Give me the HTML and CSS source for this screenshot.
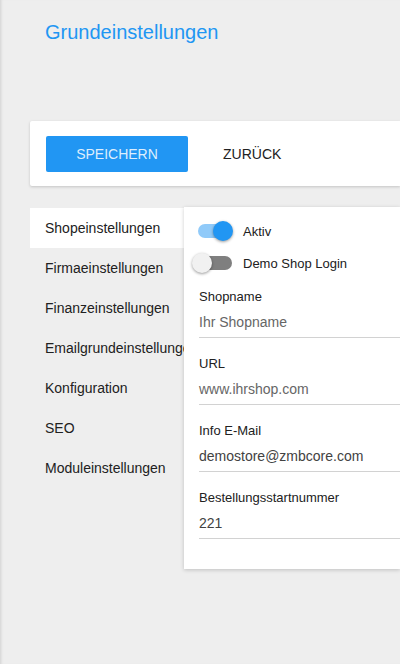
FILE: index.html
```html
<!DOCTYPE html>
<html lang="de">
<head>
<meta charset="utf-8">
<title>Grundeinstellungen</title>
<link rel="stylesheet" href="styles.css">
</head>
<body>
<div class="page">
  <h1 class="title">Grundeinstellungen</h1>

  <div class="toolbar">
    <button class="btn btn-primary">Speichern</button>
    <button class="btn btn-flat">Zurück</button>
  </div>

  <div class="content">
    <nav class="nav">
      <div class="nav-item active">Shopeinstellungen</div>
      <div class="nav-item">Firmaeinstellungen</div>
      <div class="nav-item">Finanzeinstellungen</div>
      <div class="nav-item">Emailgrundeinstellungen</div>
      <div class="nav-item">Konfiguration</div>
      <div class="nav-item">SEO</div>
      <div class="nav-item">Moduleinstellungen</div>
    </nav>

    <section class="panel">
      <div class="toggle-row">
        <span class="switch on"><span class="thumb"></span></span>
        <span class="toggle-label">Aktiv</span>
      </div>
      <div class="toggle-row">
        <span class="switch off"><span class="thumb"></span></span>
        <span class="toggle-label">Demo Shop Login</span>
      </div>

      <div class="fields">
        <div class="field">
          <div class="field-label">Shopname</div>
          <div class="field-input placeholder">Ihr Shopname</div>
        </div>
        <div class="field">
          <div class="field-label">URL</div>
          <div class="field-input placeholder">www.ihrshop.com</div>
        </div>
        <div class="field">
          <div class="field-label">Info E-Mail</div>
          <div class="field-input">demostore@zmbcore.com</div>
        </div>
        <div class="field">
          <div class="field-label">Bestellungsstartnummer</div>
          <div class="field-input">221</div>
        </div>
      </div>
    </section>
  </div>
</div>
</body>
</html>
```

FILE: styles.css
```css
* {
  box-sizing: border-box;
}

html, body {
  margin: 0;
  padding: 0;
  background: #eeeeee;
}

body {
  font-family: "Liberation Sans", Arial, Helvetica, sans-serif;
  color: #212121;
}

.page {
  min-height: 664px;
  padding-left: 30px;
  box-shadow: inset 3px 0 3px -2px rgba(0, 0, 0, 0.12);
  overflow: hidden;
}

.title {
  margin: 0;
  padding: 21px 0 0 15px;
  font-size: 20px;
  line-height: 23px;
  font-weight: normal;
  color: #2196f3;
}

.toolbar {
  margin-top: 77px;
  background: #ffffff;
  height: 65px;
  padding: 15px 16px 14px;
  display: flex;
  align-items: center;
  box-shadow: 0 1px 3px rgba(0, 0, 0, 0.18);
  border-radius: 2px 0 0 2px;
}

.btn {
  font-family: inherit;
  font-size: 14px;
  text-transform: uppercase;
  height: 36px;
  border: none;
  border-radius: 2px;
  background: transparent;
  cursor: pointer;
  line-height: 36px;
}

.btn-primary {
  width: 142px;
  padding: 0;
  background: #2196f3;
  color: rgba(255, 255, 255, 0.86);
}

.btn-flat {
  margin-left: 16px;
  padding: 0 19px;
  color: #212121;
}

.content {
  margin-top: 21px;
  display: flex;
  align-items: flex-start;
}

.nav {
  width: 154px;
  flex: 0 0 154px;
  margin-top: 1px;
}

.nav-item {
  height: 40px;
  line-height: 40px;
  padding-left: 15px;
  font-size: 14px;
  color: #212121;
  white-space: nowrap;
}

.nav-item.active {
  background: #ffffff;
}

.panel {
  position: relative;
  flex: 1;
  background: #ffffff;
  padding: 8px 0 30px 15px;
  box-shadow: 0 1px 4px rgba(0, 0, 0, 0.2);
}

.toggle-row {
  height: 32px;
  display: flex;
  align-items: center;
}

.switch {
  position: relative;
  width: 34px;
  height: 14px;
  margin-left: -1px;
  margin-right: 11px;
  border-radius: 7px;
  flex: 0 0 34px;
}

.switch.on {
  background: #90caf9;
}

.switch.off {
  background: #7f7f7f;
}

.thumb {
  position: absolute;
  top: -3px;
  width: 20px;
  height: 20px;
  border-radius: 50%;
  box-shadow: 0 1px 3px rgba(0, 0, 0, 0.4);
}

.switch.on .thumb {
  left: 15px;
  background: #2196f3;
}

.switch.off .thumb {
  left: -6px;
  background: #f1f1f1;
}

.toggle-label {
  font-size: 13px;
  color: #212121;
}

.field {
  padding-top: 18px;
}

.field:first-child {
  padding-top: 10px;
}

.field-label {
  font-size: 13px;
  line-height: 16px;
  color: #212121;
}

.field-input {
  font-size: 14px;
  line-height: 20px;
  padding: 7px 0 5px;
  border-bottom: 1px solid #d2d2d2;
  color: #424242;
}

.field-input.placeholder {
  color: #666666;
}
```
